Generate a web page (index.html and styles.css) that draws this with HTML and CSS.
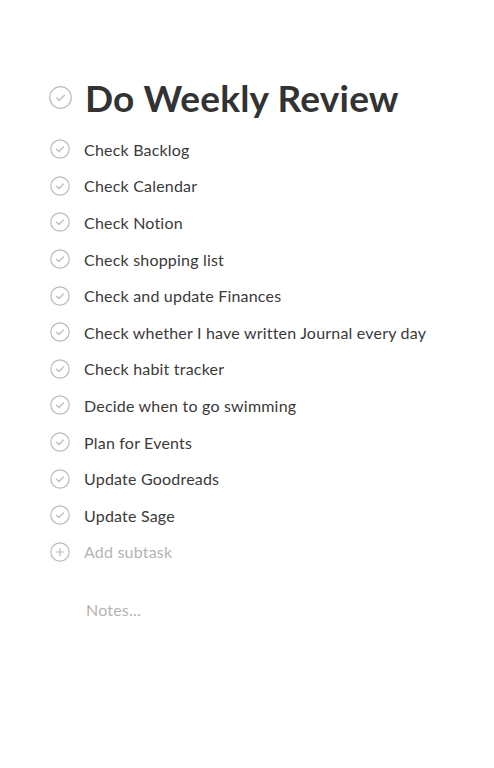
FILE: index.html
```html
<!DOCTYPE html>
<html lang="en">
<head>
    <meta charset="UTF-8">
    <meta name="viewport" content="width=device-width, initial-scale=1.0">
    <title>Do Weekly Review</title>
    <link rel="stylesheet" href="styles.css">
</head>
<body>
    <div class="task">
        <div class="task-header">
            <svg class="check big" viewBox="0 0 22 22"><circle cx="11" cy="11" r="10.3"/><path d="M7.3 11.3l2.6 2.5 4.8-5"/></svg>
            <h1 class="task-title">Do Weekly Review</h1>
        </div>

        <ul class="subtasks">
            <li class="subtask"><svg class="check" viewBox="0 0 20 20"><circle cx="10" cy="10" r="9.2"/><path d="M6.6 10.2l2.4 2.3 4.4-4.5"/></svg><span>Check Backlog</span></li>
            <li class="subtask"><svg class="check" viewBox="0 0 20 20"><circle cx="10" cy="10" r="9.2"/><path d="M6.6 10.2l2.4 2.3 4.4-4.5"/></svg><span>Check Calendar</span></li>
            <li class="subtask"><svg class="check" viewBox="0 0 20 20"><circle cx="10" cy="10" r="9.2"/><path d="M6.6 10.2l2.4 2.3 4.4-4.5"/></svg><span>Check Notion</span></li>
            <li class="subtask"><svg class="check" viewBox="0 0 20 20"><circle cx="10" cy="10" r="9.2"/><path d="M6.6 10.2l2.4 2.3 4.4-4.5"/></svg><span>Check shopping list</span></li>
            <li class="subtask"><svg class="check" viewBox="0 0 20 20"><circle cx="10" cy="10" r="9.2"/><path d="M6.6 10.2l2.4 2.3 4.4-4.5"/></svg><span>Check and update Finances</span></li>
            <li class="subtask"><svg class="check" viewBox="0 0 20 20"><circle cx="10" cy="10" r="9.2"/><path d="M6.6 10.2l2.4 2.3 4.4-4.5"/></svg><span>Check whether I have written Journal every day</span></li>
            <li class="subtask"><svg class="check" viewBox="0 0 20 20"><circle cx="10" cy="10" r="9.2"/><path d="M6.6 10.2l2.4 2.3 4.4-4.5"/></svg><span>Check habit tracker</span></li>
            <li class="subtask"><svg class="check" viewBox="0 0 20 20"><circle cx="10" cy="10" r="9.2"/><path d="M6.6 10.2l2.4 2.3 4.4-4.5"/></svg><span>Decide when to go swimming</span></li>
            <li class="subtask"><svg class="check" viewBox="0 0 20 20"><circle cx="10" cy="10" r="9.2"/><path d="M6.6 10.2l2.4 2.3 4.4-4.5"/></svg><span>Plan for Events</span></li>
            <li class="subtask"><svg class="check" viewBox="0 0 20 20"><circle cx="10" cy="10" r="9.2"/><path d="M6.6 10.2l2.4 2.3 4.4-4.5"/></svg><span>Update Goodreads</span></li>
            <li class="subtask"><svg class="check" viewBox="0 0 20 20"><circle cx="10" cy="10" r="9.2"/><path d="M6.6 10.2l2.4 2.3 4.4-4.5"/></svg><span>Update Sage</span></li>
            <li class="subtask add"><svg class="check" viewBox="0 0 20 20"><circle cx="10" cy="10" r="9.2"/><path d="M10 6.4v7.2M6.4 10h7.2"/></svg><span>Add subtask</span></li>
        </ul>

        <div class="notes">Notes...</div>
    </div>
</body>
</html>
```

FILE: styles.css
```css
body {
    margin: 0;
    background-color: #fff;
    font-family: Lato, "Open Sans", sans-serif;
    color: #3a3a3a;
}

.task {
    padding: 77px 0 0 49px;
}

.task-header {
    display: flex;
    align-items: center;
    gap: 13px;
    height: 40px;
}

.task-title {
    margin: 0;
    font-size: 37px;
    font-weight: 700;
    color: #333;
    letter-spacing: 0.2px;
}

.check {
    width: 20px;
    height: 20px;
    flex-shrink: 0;
    fill: none;
    stroke: #bcbcbc;
    stroke-width: 1.2;
    stroke-linecap: round;
    stroke-linejoin: round;
}

.check.big {
    width: 23px;
    height: 23px;
}

.subtasks {
    list-style: none;
    margin: 14px 0 0 1px;
    padding: 0;
}

.subtask {
    display: flex;
    align-items: center;
    gap: 14px;
    height: 36.6px;
    font-size: 16px;
    letter-spacing: 0.2px;
}

.subtask.add {
    color: #b4b4b4;
}

.notes {
    margin: 30px 0 0 37px;
    font-size: 16px;
    color: #b4b4b4;
    letter-spacing: 0.2px;
}
```
